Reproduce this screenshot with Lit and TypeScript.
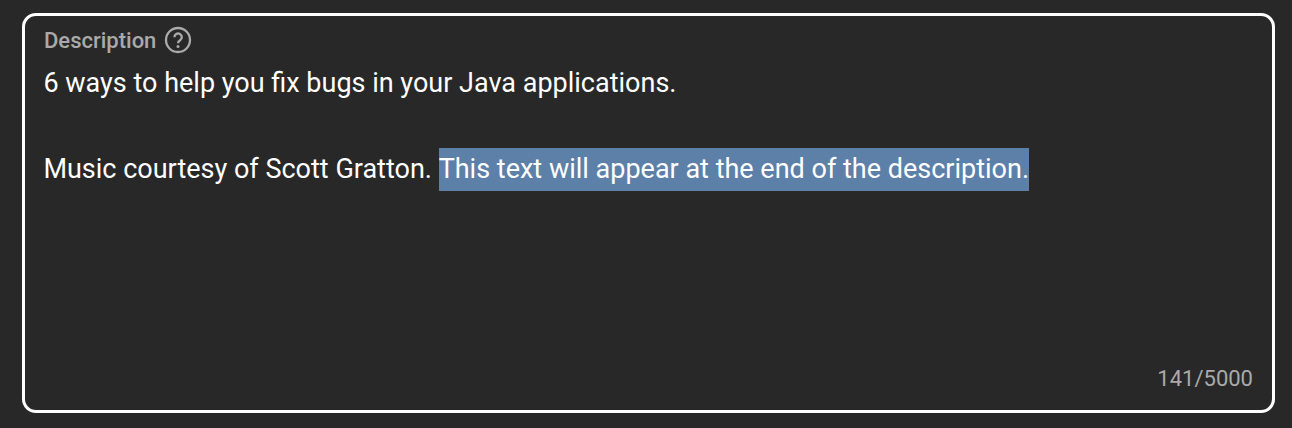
import { LitElement, html, css } from "lit";
import { customElement } from "lit/decorators.js";

@customElement("app-root")
export class AppRoot extends LitElement {
  static styles = css`
    :host { display: block; width: 1292px; height: 428px; background: #282828; font-family: Roboto, sans-serif; overflow: hidden; }
    .page { box-sizing: border-box; height: 428px; padding: 13px 17px 15px 22px; display: flex; }
    .box { box-sizing: border-box; flex: 1; border: 3px solid #fff; border-radius: 14px; padding: 10px 19px 19px 19px; display: flex; flex-direction: column; }
    .label { display: flex; align-items: center; gap: 8px; height: 28px; color: #aaa; font-size: 22px; font-weight: 500; }
    .label svg { width: 28px; height: 28px; display: block; }
    .text { flex: 1; color: #fff; font-size: 27px; line-height: 43px; margin: 8px 0 0 -0.6px; }
    .sel { display: inline-block; background: #5d80a9; }
    .count { text-align: right; color: #aaa; font-size: 22px; }
  `;
  render() {
    return html`<div class="page"><div class="box">
      <div class="label"><span>Description</span>
        <svg viewBox="0 0 28 28" fill="none" stroke="#aaa" stroke-width="2.3"><circle cx="14" cy="14" r="12"/><path d="M10.4 11.2a3.7 3.7 0 1 1 5.7 3.1c-1.3.9-2.1 1.5-2.1 2.9" stroke-linecap="butt"/><circle cx="14" cy="20.6" r="1.5" fill="#aaa" stroke="none"/></svg>
      </div>
      <div class="text">6 ways to help you fix bugs in your Java applications.<br><br>Music courtesy of Scott Gratton. <span class="sel">This text will appear at the end of the description.</span></div>
      <div class="count">141/5000</div>
    </div></div>`;
  }
}
